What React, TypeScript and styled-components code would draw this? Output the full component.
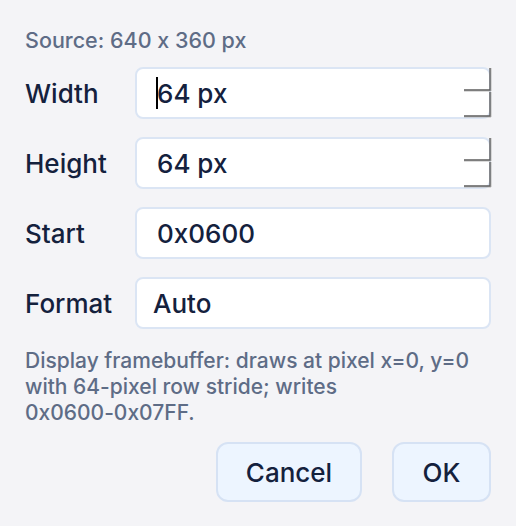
import React from 'react';
import styled, { createGlobalStyle } from 'styled-components';

const GlobalStyle = createGlobalStyle`
  html, body {
    margin: 0;
    padding: 0;
    background: #f4f4f7;
  }
  body {
    font-family: Inter, "Noto Sans", "Liberation Sans", sans-serif;
    font-feature-settings: "calt" 0;
    -webkit-font-smoothing: antialiased;
  }
  input, button {
    font-feature-settings: "calt" 0;
  }
`;

const App = () => {
  return (
    <>
      <GlobalStyle />
      <Dialog>
        <Source>Source: 640 x 360 px</Source>
        <FieldGrid>
          <NumberField label='Width' value='64 px' caret />
          <NumberField label='Height' value='64 px' />
          <Label>Start</Label>
          <TextInput value='0x0600' readOnly />
          <Label>Format</Label>
          <SelectBox>Auto</SelectBox>
        </FieldGrid>
        <Description>
          Display framebuffer: draws at pixel x=0, y=0 with 64-pixel row stride; writes{' '}
          <NoWrap>0x0600-0x07FF.</NoWrap>
        </Description>
        <Actions>
          <Button type='button'>Cancel</Button>
          <Button type='button' $wide={false}>OK</Button>
        </Actions>
      </Dialog>
    </>
  );
};

interface NumberFieldProps {
  label: string;
  value: string;
  caret?: boolean;
}

const NumberField = ({ label, value, caret = false }: NumberFieldProps) => {
  return (
    <>
      <Label>{label}</Label>
      <InputWrap>
        <TextInput value={value} readOnly />
        {caret && <Caret />}
        <Spinner width='28' height='52' viewBox='0 0 28 52'>
          <path d='M0 24 H27 V1 M0 50 H27 V25' fill='none' stroke='#b8b8b8' strokeWidth='1' />
          <path d='M0 23 H26 V1 M0 49 H26 V25' fill='none' stroke='#5e5e5e' strokeWidth='1.4' />
        </Spinner>
      </InputWrap>
    </>
  );
};

const Dialog = styled.div`
  display: flex;
  flex-direction: column;
  padding: 27px 25px 0 25px;
`;

const Source = styled.div`
  font-size: 21.5px;
  line-height: 26px;
  font-weight: 500;
  color: #5e6c86;
  margin-bottom: 14px;
`;

const FieldGrid = styled.div`
  display: grid;
  grid-template-columns: 110px 1fr;
  grid-auto-rows: 52px;
  row-gap: 18px;
  align-items: center;
`;

const Label = styled.label`
  font-size: 26px;
  font-weight: 500;
  color: #14213d;
`;

const InputWrap = styled.div`
  position: relative;
  height: 52px;
`;

const fieldStyle = `
  box-sizing: border-box;
  width: 100%;
  height: 52px;
  border: 2px solid #dbe5f4;
  border-radius: 8px;
  background: #ffffff;
  font-family: Inter, "Noto Sans", "Liberation Sans", sans-serif;
  font-size: 26px;
  font-weight: 500;
  color: #14213d;
  outline: none;
`;

const TextInput = styled.input`
  ${fieldStyle};
  display: block;
  padding: 0 20px;
`;

const SelectBox = styled.div`
  ${fieldStyle};
  display: flex;
  align-items: center;
  padding: 0 16px;
`;

const Caret = styled.span`
  position: absolute;
  left: 21px;
  top: 10px;
  width: 2px;
  height: 32px;
  background: #000;
`;

const Spinner = styled.svg`
  position: absolute;
  right: -1px;
  top: 0;
`;

const Description = styled.p`
  margin: 19px 0 0 0;
  font-size: 21px;
  line-height: 26px;
  font-weight: 500;
  color: #5e6c86;
`;

const NoWrap = styled.span`
  white-space: nowrap;
`;

const Actions = styled.div`
  display: flex;
  justify-content: flex-end;
  gap: 30px;
  margin-top: 16px;
`;

const Button = styled.button<{ $wide?: boolean }>`
  box-sizing: border-box;
  height: 60px;
  width: ${(p) => (p.$wide === false ? '99px' : '146px')};
  border: 2px solid #d6e2f4;
  border-radius: 12px;
  background: #edf5ff;
  font-family: Inter, "Noto Sans", "Liberation Sans", sans-serif;
  font-size: 26px;
  font-weight: 500;
  color: #14213d;
`;

export default App;
